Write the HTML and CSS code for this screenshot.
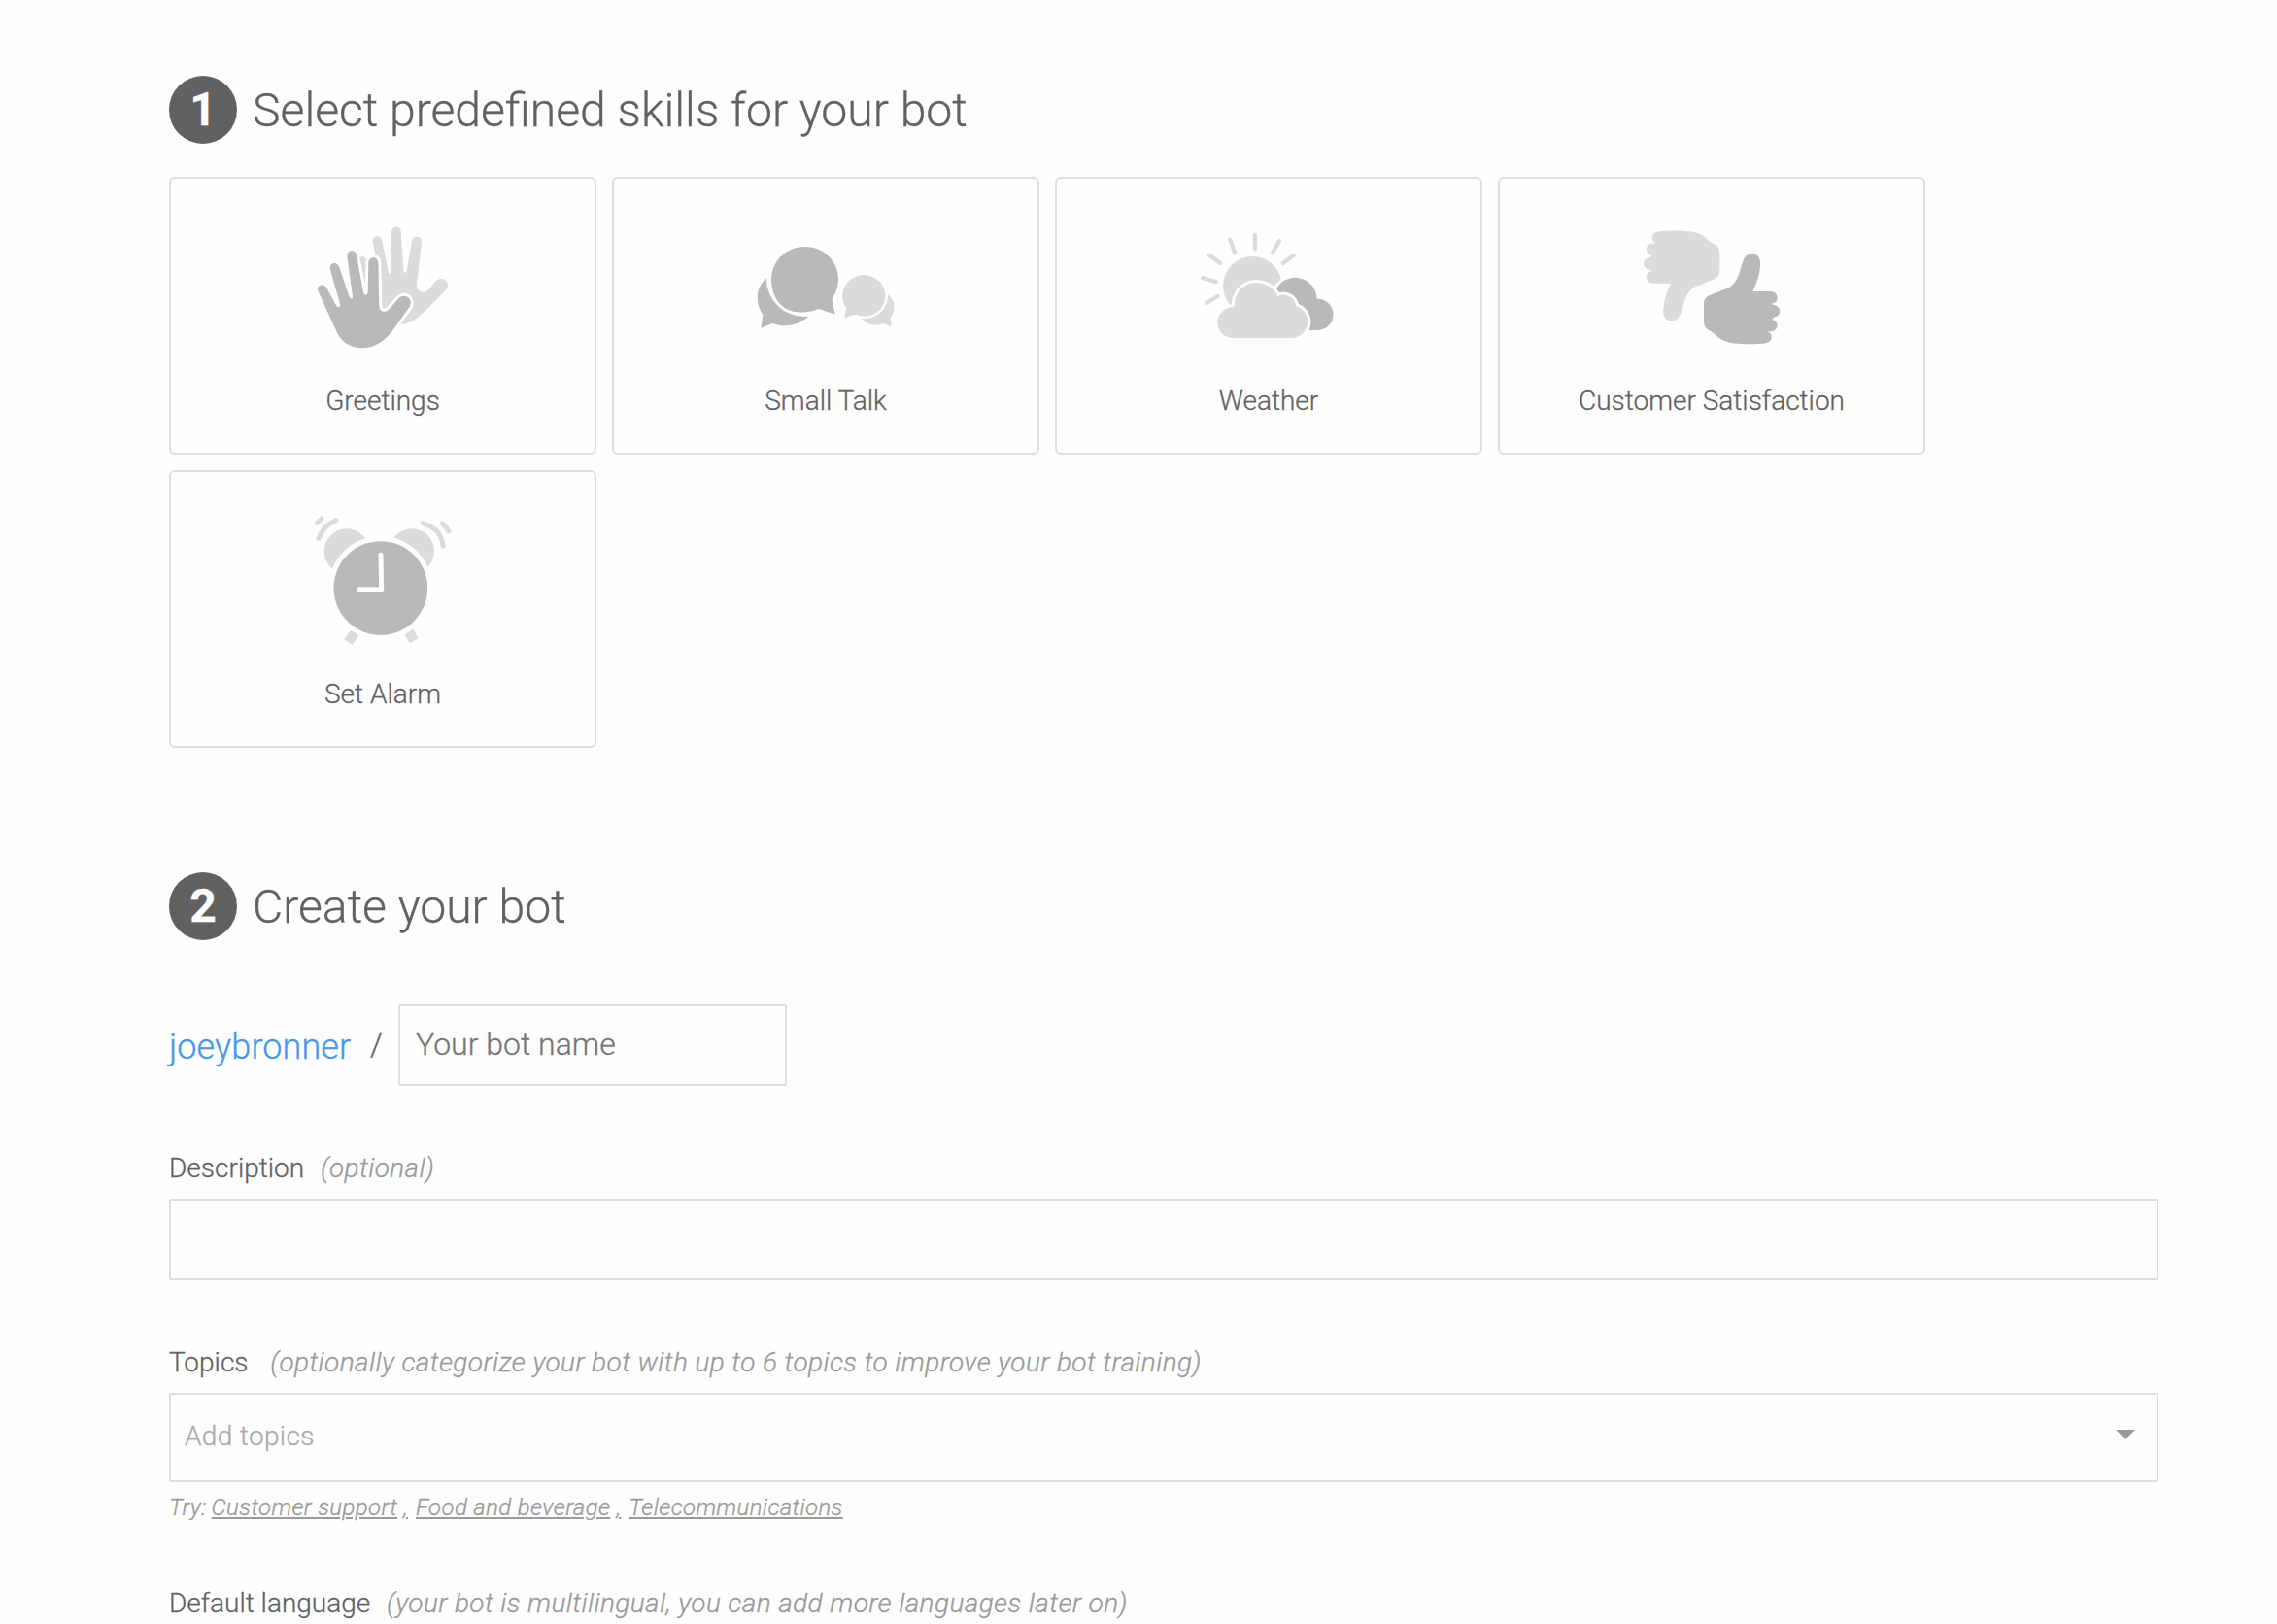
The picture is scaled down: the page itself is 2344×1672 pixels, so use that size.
FILE: index.html
```html
<!DOCTYPE html>
<html lang="en">
<head>
<meta charset="utf-8">
<title>Create a bot</title>
<link rel="stylesheet" href="styles.css">
</head>
<body>
<main class="page">
  <h2 class="step"><span class="step-number">1</span><span class="step-title">Select predefined skills for your bot</span></h2>
  <div class="skills">
    <div class="card">
      <svg class="icon" width="170" height="150" viewBox="-3 0 510 450">
        <path class="light" d="M175 148C176 127 200 128 203 148L206 200L240 180L221 87C219 64 248 64 250 85L270 182Q274 190 278 182L279 55C280 36 307 36 308 55L316 178Q320 187 326 178L342 84C345 65 373 68 372 88L357 218C356 240 376 248 390 238L417 207C436 190 463 210 450 232C410 275 378 306 360 320Q336 340 306 342L220 300L197 215Z"/>
        <path class="dark halo" d="M53 241C46 226 60 216 70 221Q77 224 80 231L109 285Q114 292 119 287Q122 284 120 278L90 173C86 157 97 151 106 153Q114 155 117 163L149 258Q153 266 158 262L159 255L142 132C141 118 152 113 159 115Q169 117 171 128L193 246Q197 254 203 250Q206 247 206 242L208 150C209 131 237 131 238 150L241 285C242 302 258 308 270 296L302 261C318 244 347 262 336 286L282 362C255 396 225 415 186 415C150 413 127 398 112 370Z"/>
      </svg>
      <span class="card-label">Greetings</span>
    </div>
    <div class="card">
      <svg class="icon" width="180" height="150" viewBox="0 0 540 450">
        <path class="dark" d="M76 312C48 270 57 220 90 197L217 316C195 342 145 355 107 338L70 353Z"/>
        <ellipse class="cut" cx="205" cy="203" rx="118" ry="115"/>
        <path class="dark" d="M299 311L256 296Q246 293 234 299C130 325 102 250 102 203A103.500 101 0 1 1 298 248Q289 257 290 268Z"/>
        <path class="light" d="M473 348L470 323C490 295 482 265 462 250L380 323C395 342 425 350 446 339Z"/>
        <ellipse class="cut" cx="387" cy="253" rx="75" ry="72"/>
        <path class="light" d="M328 321L356 312Q362 311 368 313C415 328 454 295 454 253A66.500 64 0 1 0 331 287Q335 290 333 296Z"/>
      </svg>
      <span class="card-label">Small Talk</span>
    </div>
    <div class="card">
      <svg class="icon" width="170" height="150" viewBox="3 0 510 450">
        <path class="rays" d="M216 66V109M139 80L153 119M291 84L270 121M75 128L109 153M335 129L302 153M54 198L95 210M66 276L101 255"/>
        <circle class="light" cx="208" cy="223" r="91"/>
        <path class="dark halo" d="M274 253A67 67 0 0 1 407 263A48.500 48.500 0 0 1 411 360H300Z"/>
        <path class="light halo" d="M148 384H328A50 50 0 0 0 343 286C338 255 308 244 287 255C255 190 151 200 152 289A47.600 47.600 0 1 0 148 384Z"/>
      </svg>
      <span class="card-label">Weather</span>
    </div>
    <div class="card">
      <svg class="icon" width="170" height="150" viewBox="-9 0 510 450">
        <defs><path id="thumb" d="M95 54Q130 50 165 54C200 54 225 68 238 84C255 98 271 96 271 125V175C271 200 255 201 240 208L205 222C180 228 165 255 158 285C150 310 145 331 123 331C100 331 95 312 97 292C99 265 108 240 120 215H65C45 215 38 192 50 182Q54 177 62 178Q60 173 53 173C31 168 31 140 52 136Q60 134 59 127C41 125 38 98 58 92Q70 90 76 91Q60 86 62 72C64 58 80 54 95 54Z"/></defs>
        <use class="light" href="#thumb"/>
        <use class="dark" href="#thumb" transform="rotate(180 246.500 227.500)"/>
      </svg>
      <span class="card-label">Customer Satisfaction</span>
    </div>
    <div class="card">
      <svg class="icon" width="170" height="150" viewBox="-3 6 510 450">
        <circle class="light" cx="141" cy="143" r="70"/>
        <circle class="light" cx="342" cy="142" r="69"/>
        <circle class="cut" cx="245" cy="256" r="160"/>
        <circle class="dark" cx="245.500" cy="256.500" r="145"/>
        <path class="light" d="M152 387L178 402L158 432L133 415ZM345 383L362 411L336 427L319 401Z"/>
        <path class="rays vibration" d="M54 103Q70 62 108 47M49 55L63 42M375 56Q432 72 438 126M436 57Q448 66 456 81"/>
        <path class="clock-hands" d="M246 154L248 260H180"/>
      </svg>
      <span class="card-label">Set Alarm</span>
    </div>
  </div>

  <h2 class="step step-create"><span class="step-number">2</span><span class="step-title">Create your bot</span></h2>
  <div class="name-row">
    <a class="owner">joeybronner</a><span class="slash">/</span>
    <div class="name-input">Your bot name</div>
  </div>

  <div class="field">
    <div class="label">Description <em class="hint hint-description">(optional)</em></div>
    <div class="input"></div>
  </div>
  <div class="field">
    <div class="label">Topics <em class="hint hint-topics">(optionally categorize your bot with up to 6 topics to improve your bot training)</em></div>
    <div class="input select"><span class="placeholder">Add topics</span><svg width="20" height="10" viewBox="0 0 20 10"><path fill="#999" d="M0 0H20L10 10Z"/></svg></div>
    <div class="try"><span>Try:</span><u class="t1">Customer support</u><u class="comma">,</u><u class="t2">Food and beverage</u><u class="comma">,</u><u class="t2">Telecommunications</u></div>
  </div>
  <div class="field language">
    <div class="label">Default language <em class="hint hint-description">(your bot is multilingual, you can add more languages later on)</em></div>
  </div>
</main>
</body>
</html>
```

FILE: styles.css
```css
* { box-sizing: border-box; }
html, body { margin: 0; height: 1672px; overflow: hidden; }
body {
  background: #fefefe;
  color: #616161;
  font-family: Roboto, "Liberation Sans", sans-serif;
  font-weight: 300;
  font-size: 28px;
  -webkit-text-stroke: 0.3px currentColor;
}
.page { width: 2048px; margin-left: 174px; padding-top: 78px; }
.step { display: flex; align-items: center; height: 70px; margin: 0; font-weight: 300; font-size: 48px; }
.step-number {
  width: 70px; height: 70px; border-radius: 50%;
  background: #616161; color: #fefefe;
  font-weight: 700; line-height: 70px; text-align: center;
}
.step-title { margin-left: 16px; padding-top: 2px; font-size: 48.1px; line-height: 70px; white-space: nowrap; }
.skills { display: grid; grid-template-columns: repeat(4, 440px); gap: 16px; margin-top: 34px; }
.card {
  display: flex; flex-direction: column; align-items: center;
  height: 286px; padding-top: 36px;
  border: 2px solid #dedede; border-radius: 6px;
}
.icon { display: block; }
.card-label { margin-top: 23px; line-height: 40px; }
.light { fill: #dbdbdb; }
.dark { fill: #b9b9b9; }
.cut { fill: #fefefe; }
.halo { stroke: #fefefe; stroke-width: 18px; paint-order: stroke; stroke-linejoin: round; }
.rays { fill: none; stroke: #dbdbdb; stroke-width: 13px; stroke-linecap: round; }
.vibration { stroke-width: 15px; }
.clock-hands { fill: none; stroke: #fefefe; stroke-width: 15px; stroke-linecap: round; stroke-linejoin: round; }

.step-create { margin-top: 128px; }
.name-row { display: flex; height: 84px; margin-top: 66px; line-height: 84px; }
.owner { width: 207px; color: #4596ec; font-size: 36px; padding-top: 2px; letter-spacing: 0.1px; }
.slash { width: 29px; font-size: 32px; line-height: 82px; }
.name-input {
  width: 400px; height: 84px; padding-left: 16px;
  border: 2px solid #dedede; border-radius: 2px;
  color: #757575; font-size: 32px; line-height: 78px;
}
.field { margin-top: 64px; }
.label { height: 40px; line-height: 42px; white-space: nowrap; }
.hint { color: #999; letter-spacing: 0.39px; }
.hint-description { margin-left: 10px; }
.hint-topics { margin-left: 16px; }
.input { height: 84px; margin-top: 12px; border: 2px solid #dedede; border-radius: 2px; }
.select {
  display: flex; justify-content: space-between; align-items: center;
  height: 92px; padding: 0 22px 6px 14px; color: #aaa; letter-spacing: 0.35px;
}
.placeholder { padding-top: 2px; }
.try { display: flex; height: 36px; margin-top: 8px; line-height: 36px; color: #999; font-size: 24px; font-style: italic; letter-spacing: 0.36px; }
.t1 { margin-left: 5px; }
.comma { margin-left: 6px; }
.t2 { margin-left: 8px; }
.language { margin-top: 60px; }
```
